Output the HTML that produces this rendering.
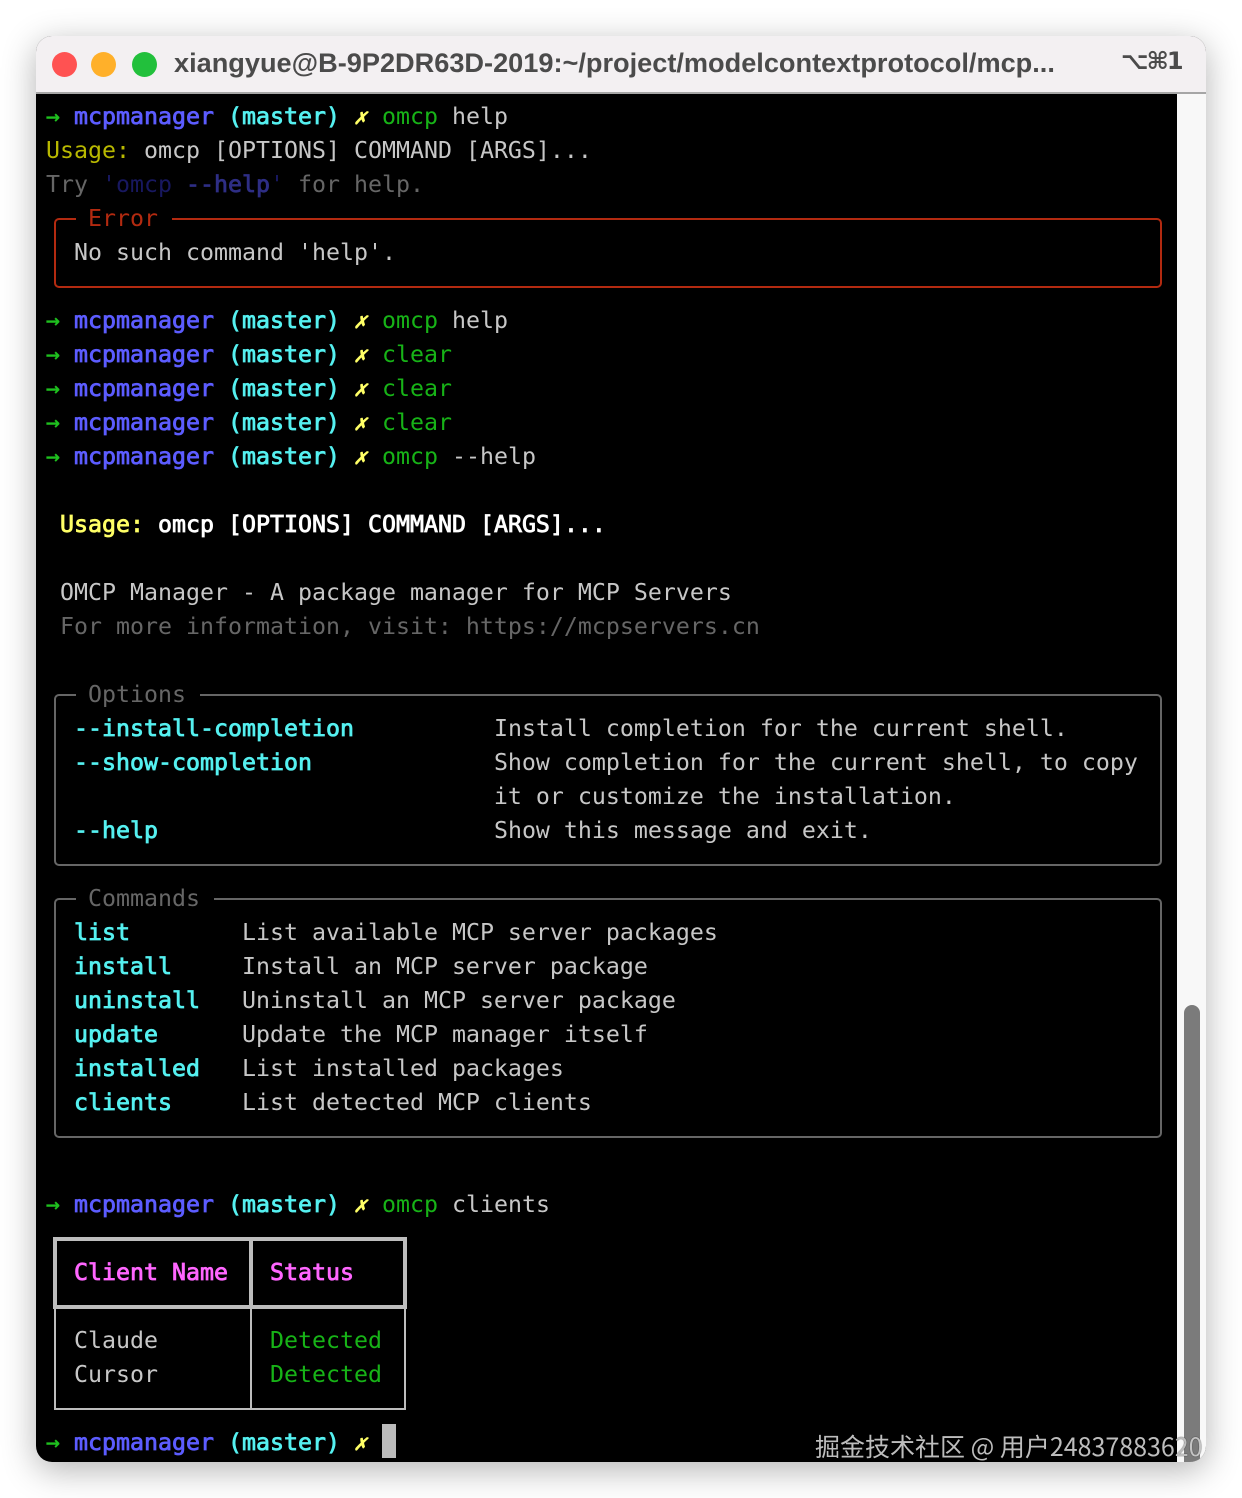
<!DOCTYPE html>
<html lang="zh"><head><meta charset="utf-8"><title>Terminal</title>
<style>
html,body{margin:0;padding:0;background:#fff}
body{width:1242px;height:1498px;position:relative;overflow:hidden}
#win{position:absolute;left:36px;top:36px;width:1170px;height:1426px;border-radius:16px;box-shadow:0 8px 34px rgba(0,0,0,.3)}
#clip{position:absolute;inset:0;border-radius:16px;overflow:hidden;background:#000}
#bar{position:absolute;left:0;top:0;width:1170px;height:56px;background:#f3f0f2;border-bottom:2px solid #a6a6a6}
.l{position:absolute;top:16px;width:25px;height:25px;border-radius:50%}
#ti{position:absolute;left:138px;top:9px;font:bold 27.15px/36px "Liberation Sans",sans-serif;color:#4b4b4b;white-space:pre}
#sh{position:absolute;left:1085px;top:7px;font:bold 24px/36px "DejaVu Sans","Liberation Sans",sans-serif;color:#4b4b4b;white-space:pre;letter-spacing:-2px}
#sb{position:absolute;left:1141px;top:58px;width:29px;height:1368px;background:#f8f8f8}
#th{position:absolute;left:1148px;top:969px;width:16px;height:457px;background:#7b7b7b;border-radius:8px 8px 0 0}
.b{position:absolute;box-sizing:border-box;border:2px solid #666;border-radius:5px}
.t{position:absolute;background:#000;height:34px}
.g{position:absolute;background:#bdbdbd}
#txt{position:absolute;left:46px;top:100px;margin:0;font:23.25px/34px "DejaVu Sans Mono","Liberation Mono",monospace;color:#c7c7c7;white-space:pre;filter:blur(.3px)}
.a{display:inline-block;width:14px;color:#1fc01f;-webkit-text-stroke:.5px #1fc01f}
.bl{color:#5c5cff;-webkit-text-stroke:.8px #5c5cff}.cy{color:#55f0f0;-webkit-text-stroke:.8px #55f0f0}
.x{display:inline-block;width:14px;color:#ffff66;font-weight:bold;font-style:italic;font-size:21px}
.gr{color:#17b317}.ye{color:#b8b800}.dim{color:#666}.d1{color:#181860}.d2{color:#2e2e85;-webkit-text-stroke:.8px #2e2e85}
.re{color:#b32a10}.yb{color:#ffff66;-webkit-text-stroke:.8px #ffff66}.w{color:#fff;-webkit-text-stroke:.8px #fff}
.ma{color:#ff66ff;-webkit-text-stroke:.8px #ff66ff}
#cur{position:absolute;left:382px;top:1424px;width:14px;height:34px;background:#bbb}
#wm{position:absolute;left:815px;top:1430px;font:25px/32px "Noto Sans CJK SC","Liberation Sans",sans-serif;color:#bdbdbd;white-space:pre;text-shadow:0 0 1px rgba(0,0,0,.8)}
</style></head><body>
<div id="win"><div id="clip">
<div id="bar">
<div class="l" style="left:16px;background:#ff5252"></div>
<div class="l" style="left:55px;background:#ffb02a"></div>
<div class="l" style="left:96px;background:#22c03c"></div>
<div id="ti">xiangyue@B-9P2DR63D-2019:~/project/modelcontextprotocol/mcp...</div>
<div id="sh">⌥⌘1</div>
</div>
<div id="sb"></div><div id="th"></div>
</div></div>

<div class="b" style="left:54px;top:218px;width:1108px;height:70px;border-color:#b32a10"></div>
<div class="t" style="left:76px;top:202px;width:96px"></div>
<div class="b" style="left:54px;top:694px;width:1108px;height:172px"></div>
<div class="t" style="left:76px;top:678px;width:124px"></div>
<div class="b" style="left:54px;top:898px;width:1108px;height:240px"></div>
<div class="t" style="left:76px;top:882px;width:138px"></div>

<div class="g" style="left:53px;top:1237px;width:354px;height:4px"></div>
<div class="g" style="left:53px;top:1305px;width:354px;height:4px"></div>
<div class="g" style="left:53px;top:1237px;width:4px;height:72px"></div>
<div class="g" style="left:403px;top:1237px;width:4px;height:72px"></div>
<div class="g" style="left:249px;top:1237px;width:4px;height:72px"></div>
<div class="g" style="left:54px;top:1309px;width:2px;height:101px"></div>
<div class="g" style="left:404px;top:1309px;width:2px;height:101px"></div>
<div class="g" style="left:250px;top:1309px;width:2px;height:101px"></div>
<div class="g" style="left:54px;top:1408px;width:352px;height:2px"></div>

<pre id="txt"><span class="a">→</span> <span class="bl">mcpmanager</span> <span class="cy">(master)</span> <span class="x">✗</span> <span class="gr">omcp</span> help
<span class="ye">Usage:</span> omcp [OPTIONS] COMMAND [ARGS]...
<span class="dim">Try </span><span class="d1">'omcp </span><span class="d2">--help</span><span class="d1">'</span><span class="dim"> for help.</span>
   <span class="re">Error</span>
  No such command 'help'.

<span class="a">→</span> <span class="bl">mcpmanager</span> <span class="cy">(master)</span> <span class="x">✗</span> <span class="gr">omcp</span> help
<span class="a">→</span> <span class="bl">mcpmanager</span> <span class="cy">(master)</span> <span class="x">✗</span> <span class="gr">clear</span>
<span class="a">→</span> <span class="bl">mcpmanager</span> <span class="cy">(master)</span> <span class="x">✗</span> <span class="gr">clear</span>
<span class="a">→</span> <span class="bl">mcpmanager</span> <span class="cy">(master)</span> <span class="x">✗</span> <span class="gr">clear</span>
<span class="a">→</span> <span class="bl">mcpmanager</span> <span class="cy">(master)</span> <span class="x">✗</span> <span class="gr">omcp</span> --help

 <span class="yb">Usage:</span> <span class="w">omcp [OPTIONS] COMMAND [ARGS]</span><span class="w">...</span>

 OMCP Manager - A package manager for MCP Servers
 <span class="dim">For more information, visit: https://mcpservers.cn</span>

   <span class="dim">Options</span>
  <span class="cy">--install-completion</span>          Install completion for the current shell.
  <span class="cy">--show-completion</span>             Show completion for the current shell, to copy
                                it or customize the installation.
  <span class="cy">--help</span>                        Show this message and exit.

   <span class="dim">Commands</span>
  <span class="cy">list</span>        List available MCP server packages
  <span class="cy">install</span>     Install an MCP server package
  <span class="cy">uninstall</span>   Uninstall an MCP server package
  <span class="cy">update</span>      Update the MCP manager itself
  <span class="cy">installed</span>   List installed packages
  <span class="cy">clients</span>     List detected MCP clients


<span class="a">→</span> <span class="bl">mcpmanager</span> <span class="cy">(master)</span> <span class="x">✗</span> <span class="gr">omcp</span> clients

  <span class="ma">Client Name</span>   <span class="ma">Status</span>

  Claude        <span class="gr">Detected</span>
  Cursor        <span class="gr">Detected</span>

<span class="a">→</span> <span class="bl">mcpmanager</span> <span class="cy">(master)</span> <span class="x">✗</span></pre>
<div id="cur"></div>
<div id="wm">掘金技术社区 @ 用户2483788362<span style="color:#c4c4c4">0</span></div>
</body></html>
